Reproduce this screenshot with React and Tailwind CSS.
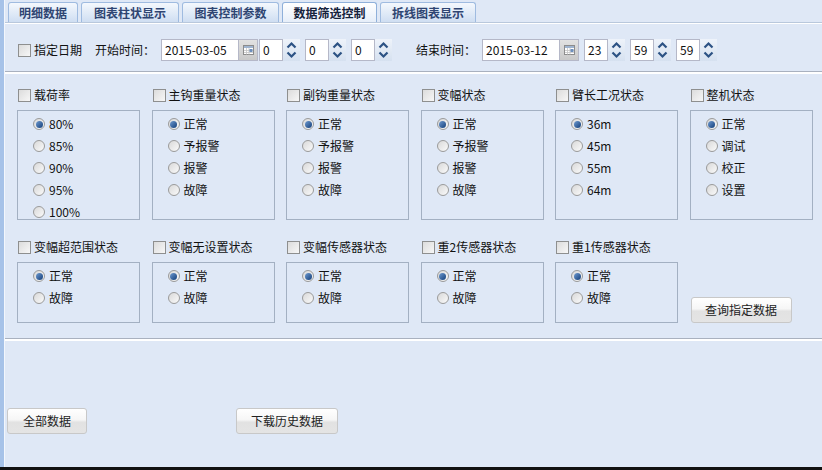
import React from 'react';

const FONT = { fontFamily: '"Noto Sans CJK SC", "Noto Sans", sans-serif' };

const tabs = [
    { label: '明细数据', w: 'w-[70px]' },
    { label: '图表柱状显示', w: 'w-[98px]' },
    { label: '图表控制参数', w: 'w-[97px]' },
    { label: '数据筛选控制', w: 'w-[95px]', active: true },
    { label: '拆线图表显示', w: 'w-[96px]' },
];

const statusOpts = ['正常', '予报警', '报警', '故障'];

const groupsTop = [
    { title: '载荷率', opts: ['80%', '85%', '90%', '95%', '100%'] },
    { title: '主钩重量状态', opts: statusOpts },
    { title: '副钩重量状态', opts: statusOpts },
    { title: '变幅状态', opts: statusOpts },
    { title: '臂长工况状态', opts: ['36m', '45m', '55m', '64m'] },
    { title: '整机状态', opts: ['正常', '调试', '校正', '设置'] },
];

const groupsBottom = ['变幅超范围状态', '变幅无设置状态', '变幅传感器状态', '重2传感器状态', '重1传感器状态'];

const Checkbox = () => (
    <span className="w-[13px] h-[13px] shrink-0 border border-[#8e8f8f] bg-gradient-to-br from-[#dcdcdc] to-[#f7f7f7]" />
);

const Radio = ({ checked }) => (
    <span className="w-[12px] h-[12px] shrink-0 rounded-full border border-[#9a9a9a] bg-gradient-to-br from-[#d9d9d9] to-[#fafafa] flex items-center justify-center">
        {checked && <span className="w-[7px] h-[7px] rounded-full bg-gradient-to-br from-[#6f9bd1] to-[#123f7a]" />}
    </span>
);

const CheckLabel = ({ children }) => (
    <div className="h-[16px] flex items-center gap-[3px] pl-[1px] mb-[7px]">
        <Checkbox />
        <span className="text-[12px] leading-none text-[#111]">{children}</span>
    </div>
);

const Group = ({ title, opts, boxH }) => (
    <div className="w-[123px] flex flex-col">
        <CheckLabel>{title}</CheckLabel>
        <div className={`${boxH} border border-[#a3b0c2] pt-[2px] pl-[15px]`}>
            {opts.map((o, i) => (
                <div key={o} className="h-[22px] flex items-center gap-[4px]">
                    <Radio checked={i === 0} />
                    <span className="text-[12px] leading-none text-[#111]">{o}</span>
                </div>
            ))}
        </div>
    </div>
);

const DateField = ({ value }) => (
    <div className="h-[22px] w-[97px] flex border border-[#b5b8c8] bg-white">
        <span className="flex-1 pl-[3px] flex items-center text-[12px] text-[#111]">{value}</span>
        <span className="w-[19px] h-full bg-gradient-to-b from-[#e2e2e2] to-[#c9c9c9] border-l border-[#b5b8c8] flex items-center justify-center">
            <svg width="11" height="10" viewBox="0 0 11 10">
                <rect x="0.5" y="0.5" width="10" height="9" fill="#fff" stroke="#8c8c8c" />
                <rect x="1" y="1" width="9" height="2" fill="#9fb4cf" />
                <path d="M1 5.5H10M1 7.5H10M3.5 3V9.5M6 3V9.5" stroke="#c4c4c4" strokeWidth="0.8" />
                <rect x="6.5" y="4" width="3" height="3" fill="#6e8fbc" />
            </svg>
        </span>
    </div>
);

const Spinner = ({ value }) => (
    <div className="h-[22px] flex">
        <span className="w-[24px] h-full bg-white border border-[#b5b8c8] pl-[3px] flex items-center text-[12px] text-[#111]">{value}</span>
        <span className="w-[17px] h-full bg-gradient-to-b from-[#eef3fa] to-[#d6e1f0] flex items-center justify-center">
            <svg width="17" height="22" viewBox="0 0 17 22">
                <path d="M4.5 8.5L8.5 4.5L12.5 8.5" fill="none" stroke="#2c5284" strokeWidth="2.2" />
                <path d="M4.5 13.5L8.5 17.5L12.5 13.5" fill="none" stroke="#2c5284" strokeWidth="2.2" />
            </svg>
        </span>
    </div>
);

const Button = ({ children, w }) => (
    <button className={`${w} h-[26px] rounded-[3px] border border-[#c8c8c8] bg-[linear-gradient(#ffffff_0%,#f6f6f6_45%,#e2e2e2_55%,#e4e4e4_100%)] text-[12px] text-[#222] flex items-center justify-center`}>
        {children}
    </button>
);

const Separator = () => (
    <div className="border-t border-[#a9b1bf] border-b-2 border-b-white" />
);

export default function App() {
    return (
        <div className="w-[822px] h-[470px] flex flex-col bg-[#dfe8f6] overflow-hidden" style={FONT}>
            <div className="flex-1 flex min-h-0">
                {/* left frame edge */}
                <div className="w-[4px] bg-[#a6c2e8]" />
                <div className="w-[1px] bg-[#f2f6fc]" />

                <div className="flex-1 flex flex-col min-w-0">
                    {/* tab strip */}
                    <div className="h-[22px] flex items-end gap-[3px] pl-[3px]">
                        {tabs.map((t) => (
                            <div
                                key={t.label}
                                className={`${t.w} h-[20px] rounded-t-[3px] border border-b-0 flex items-center justify-center text-[12px] font-bold ${
                                    t.active
                                        ? 'border-[#8fb0da] bg-gradient-to-b from-[#ffffff] to-[#e6eef9] text-[#15223b]'
                                        : 'border-[#9fbbe0] bg-gradient-to-b from-[#f4f8fd] to-[#cfdef2] text-[#2f4572]'
                                }`}
                            >
                                {t.label}
                            </div>
                        ))}
                    </div>
                    <div className="border-t border-[#b9c8dc] border-b border-b-white" />

                    {/* time filter row */}
                    <div className="flex items-center pt-[15px] pb-[10px]">
                        <div className="ml-[13px] flex items-center gap-[3px]">
                            <Checkbox />
                            <span className="text-[12px] text-[#111]">指定日期</span>
                        </div>
                        <span className="ml-[13px] text-[12px] text-[#111] w-[60px]">开始时间：</span>
                        <div className="ml-[6px]"><DateField value="2015-03-05" /></div>
                        <div className="ml-[1px]"><Spinner value="0" /></div>
                        <div className="ml-[5px]"><Spinner value="0" /></div>
                        <div className="ml-[5px]"><Spinner value="0" /></div>
                        <span className="ml-[24px] text-[12px] text-[#111] w-[60px]">结束时间：</span>
                        <div className="ml-[6px]"><DateField value="2015-03-12" /></div>
                        <div className="ml-[5px]"><Spinner value="23" /></div>
                        <div className="ml-[5px]"><Spinner value="59" /></div>
                        <div className="ml-[5px]"><Spinner value="59" /></div>
                    </div>
                    <Separator />

                    {/* status groups */}
                    <div className="pl-[12px] pt-[13px] pb-[15px] flex flex-col">
                        <div className="flex gap-x-[11.5px]">
                            {groupsTop.map((g) => (
                                <Group key={g.title} title={g.title} opts={g.opts} boxH="h-[110px]" />
                            ))}
                        </div>
                        <div className="flex gap-x-[11.5px] mt-[19px]">
                            {groupsBottom.map((t) => (
                                <Group key={t} title={t} opts={['正常', '故障']} boxH="h-[61px]" />
                            ))}
                            <div className="w-[123px] flex flex-col justify-end pl-[1px]">
                                <Button w="w-[101px]">查询指定数据</Button>
                            </div>
                        </div>
                    </div>
                    <Separator />

                    {/* bottom actions */}
                    <div className="flex items-start pt-[67px] pl-[2px]">
                        <Button w="w-[80px]">全部数据</Button>
                        <div className="ml-[149px]">
                            <Button w="w-[102px]">下载历史数据</Button>
                        </div>
                    </div>
                </div>
            </div>
            <div className="h-[3px] bg-[#111]" />
        </div>
    );
}
